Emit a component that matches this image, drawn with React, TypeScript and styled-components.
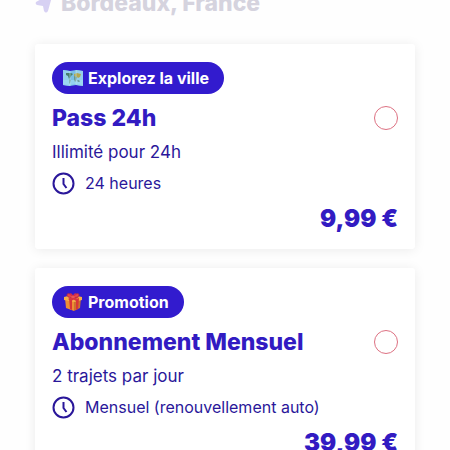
import React from "react";
import styled, { createGlobalStyle } from "styled-components";

const GlobalStyle = createGlobalStyle`
  *, *::before, *::after { box-sizing: border-box; }
  body { margin: 0; background: #fefefe; font-family: Inter, "Liberation Sans", sans-serif; }
`;

const Page = styled.main`
  height: 100vh;
  overflow: hidden;
  color: #2a179a;
`;

const Location = styled.header`
  display: flex;
  align-items: flex-end;
  gap: 8px;
  height: 16px;
  padding: 0 35px;
  overflow: hidden;
  color: #d5d3de;
`;

const City = styled.h1`
  margin: 0;
  font-size: 23px;
  line-height: 26px;
  font-weight: 800;
`;

const Arrow = styled.svg`
  flex: none;
  width: 18px;
  height: 26px;
  color: #d7d1f3;
`;

const Offers = styled.section`
  display: flex;
  flex-direction: column;
  gap: 19px;
  padding: 28px 35px;
`;

const Card = styled.article`
  display: flex;
  flex-direction: column;
  flex: none;
  padding: 18px 17px 15px;
  border-radius: 3px;
  background: #ffffff;
  box-shadow: 0 1px 12px rgba(0, 0, 0, 0.08);
`;

const Badge = styled.div`
  display: flex;
  align-items: center;
  align-self: flex-start;
  gap: 5px;
  height: 32px;
  padding: 0 15px 0 11px;
  border-radius: 16px;
  background: #321bce;
  color: #ffffff;
  font-size: 16px;
  font-weight: 700;
`;

const BadgeIcon = styled.svg`
  flex: none;
  width: 20px;
  height: 20px;
`;

const TitleRow = styled.label`
  display: flex;
  align-items: center;
  justify-content: space-between;
  margin-top: 9px;
  cursor: pointer;
`;

const Title = styled.span`
  font-size: 23px;
  line-height: 30px;
  font-weight: 800;
  color: #321bc2;
`;

const Choice = styled.input`
  appearance: none;
  flex: none;
  width: 24px;
  height: 24px;
  margin: 0;
  border: 1px solid #dd7182;
  border-radius: 50%;
  background: #ffffff;
  cursor: pointer;

  &:checked {
    background: #321bce;
    box-shadow: inset 0 0 0 4px #ffffff;
  }
`;

const Detail = styled.p`
  margin: 7px 0 0;
  font-size: 17px;
  line-height: 24px;
`;

const Duration = styled.div`
  display: flex;
  align-items: center;
  gap: 10px;
  margin-top: 8px;
  font-size: 16px;
  line-height: 23px;
`;

const Clock = styled.svg`
  flex: none;
  width: 23px;
  height: 23px;
`;

const Price = styled.strong`
  align-self: flex-end;
  margin-top: 9px;
  font-size: 24px;
  line-height: 30px;
  font-weight: 900;
  color: #321bc2;
`;

function MapIcon() {
  return (
    <BadgeIcon viewBox="0 0 20 20" aria-hidden="true">
      <path d="M0 2 7 3l6-1 7 1v15l-7-1-6 1-7-1Z" fill="#79bfe6" />
      <path d="M0 2 7 3v15l-7-1ZM13 2l7 1v15l-7-1Z" fill="#94cfec" />
      <path d="M0 12h20v5l-7-1-6 1-7-1Z" fill="#9fdcf4" opacity=".7" />
      <path d="M3 5h5l2 1-2 2-1 2-1 1-1-3-2-1Z" fill="#477e6c" />
      <path d="m6 11 2 1-1 3-1 1Z" fill="#69a6a0" />
      <path d="m11 6 3-1 4 1-1 3-2 1-1-1-3-1Z" fill="#b2a851" />
      <path d="m11 8 3 1-1 4-1 1-1-3Z" fill="#68978d" />
      <path d="m15 12 2 1-1 1-2-1Z" fill="#668f85" />
      <path d="M7 3v15M13 2v15" stroke="#c3e6ef" strokeWidth="1" opacity=".6" />
    </BadgeIcon>
  );
}

function GiftIcon() {
  return (
    <BadgeIcon viewBox="0 0 20 20" aria-hidden="true">
      <path d="m2 6 9 1v12l-8-3Z" fill="#ed8e35" />
      <path d="m11 7 7-1-1 10-6 3Z" fill="#cc712e" />
      <path d="m1 5 8-2 10 2v3l-8 2L1 8Z" fill="#f6ae49" />
      <path d="m6 6 3 1v11l-2-1Zm7 1 3-1-1 11-2 1Z" fill="#d93537" />
      <path d="m5 4 8 5 3-1-8-5Zm8-1-8 4 3 2 8-4Z" fill="#d83541" />
      <path d="M10 5C7 6 4 5 4 3c0-2 4-2 6 2Zm0 0c2-4 6-4 6-2 0 2-3 3-6 2Z" fill="#e9464c" stroke="#b52d46" />
      <path d="M7 3c-1-2 2-3 3 1 1-4 4-3 3-1l-3 2Z" fill="#d32d49" />
      <ellipse cx="10" cy="5" rx="2" ry="1" fill="#ed5959" />
    </BadgeIcon>
  );
}

interface OfferProps {
  id: string;
  icon: React.ReactNode;
  badge: string;
  title: string;
  detail: string;
  duration: string;
  price: string;
}

function Offer({ id, icon, badge, title, detail, duration, price }: OfferProps) {
  return (
    <Card>
      <Badge>{icon}{badge}</Badge>
      <TitleRow htmlFor={id}>
        <Title>{title}</Title>
        <Choice id={id} type="radio" name="offer" value={id} />
      </TitleRow>
      <Detail>{detail}</Detail>
      <Duration>
        <Clock viewBox="0 0 23 23" fill="none" stroke="currentColor" strokeWidth="2" aria-hidden="true">
          <circle cx="11.5" cy="11.5" r="10" />
          <path d="M11.5 6v6l3 4" />
        </Clock>
        {duration}
      </Duration>
      <Price>{price}</Price>
    </Card>
  );
}

export default function App() {
  return (
    <>
      <GlobalStyle />
      <Page>
        <Location>
          <Arrow viewBox="0 0 18 26" aria-hidden="true">
            <path d="M17 3 1 12q-1 2 1 3l6 1 1 5q2 3 4 0l5-18Z" fill="currentColor" />
          </Arrow>
          <City>Bordeaux, France</City>
        </Location>
        <Offers>
          <Offer id="pass-24h" icon={<MapIcon />} badge="Explorez la ville" title="Pass 24h" detail="Illimité pour 24h" duration="24 heures" price="9,99 €" />
          <Offer id="mensuel" icon={<GiftIcon />} badge="Promotion" title="Abonnement Mensuel" detail="2 trajets par jour" duration="Mensuel (renouvellement auto)" price="39,99 €" />
        </Offers>
      </Page>
    </>
  );
}
